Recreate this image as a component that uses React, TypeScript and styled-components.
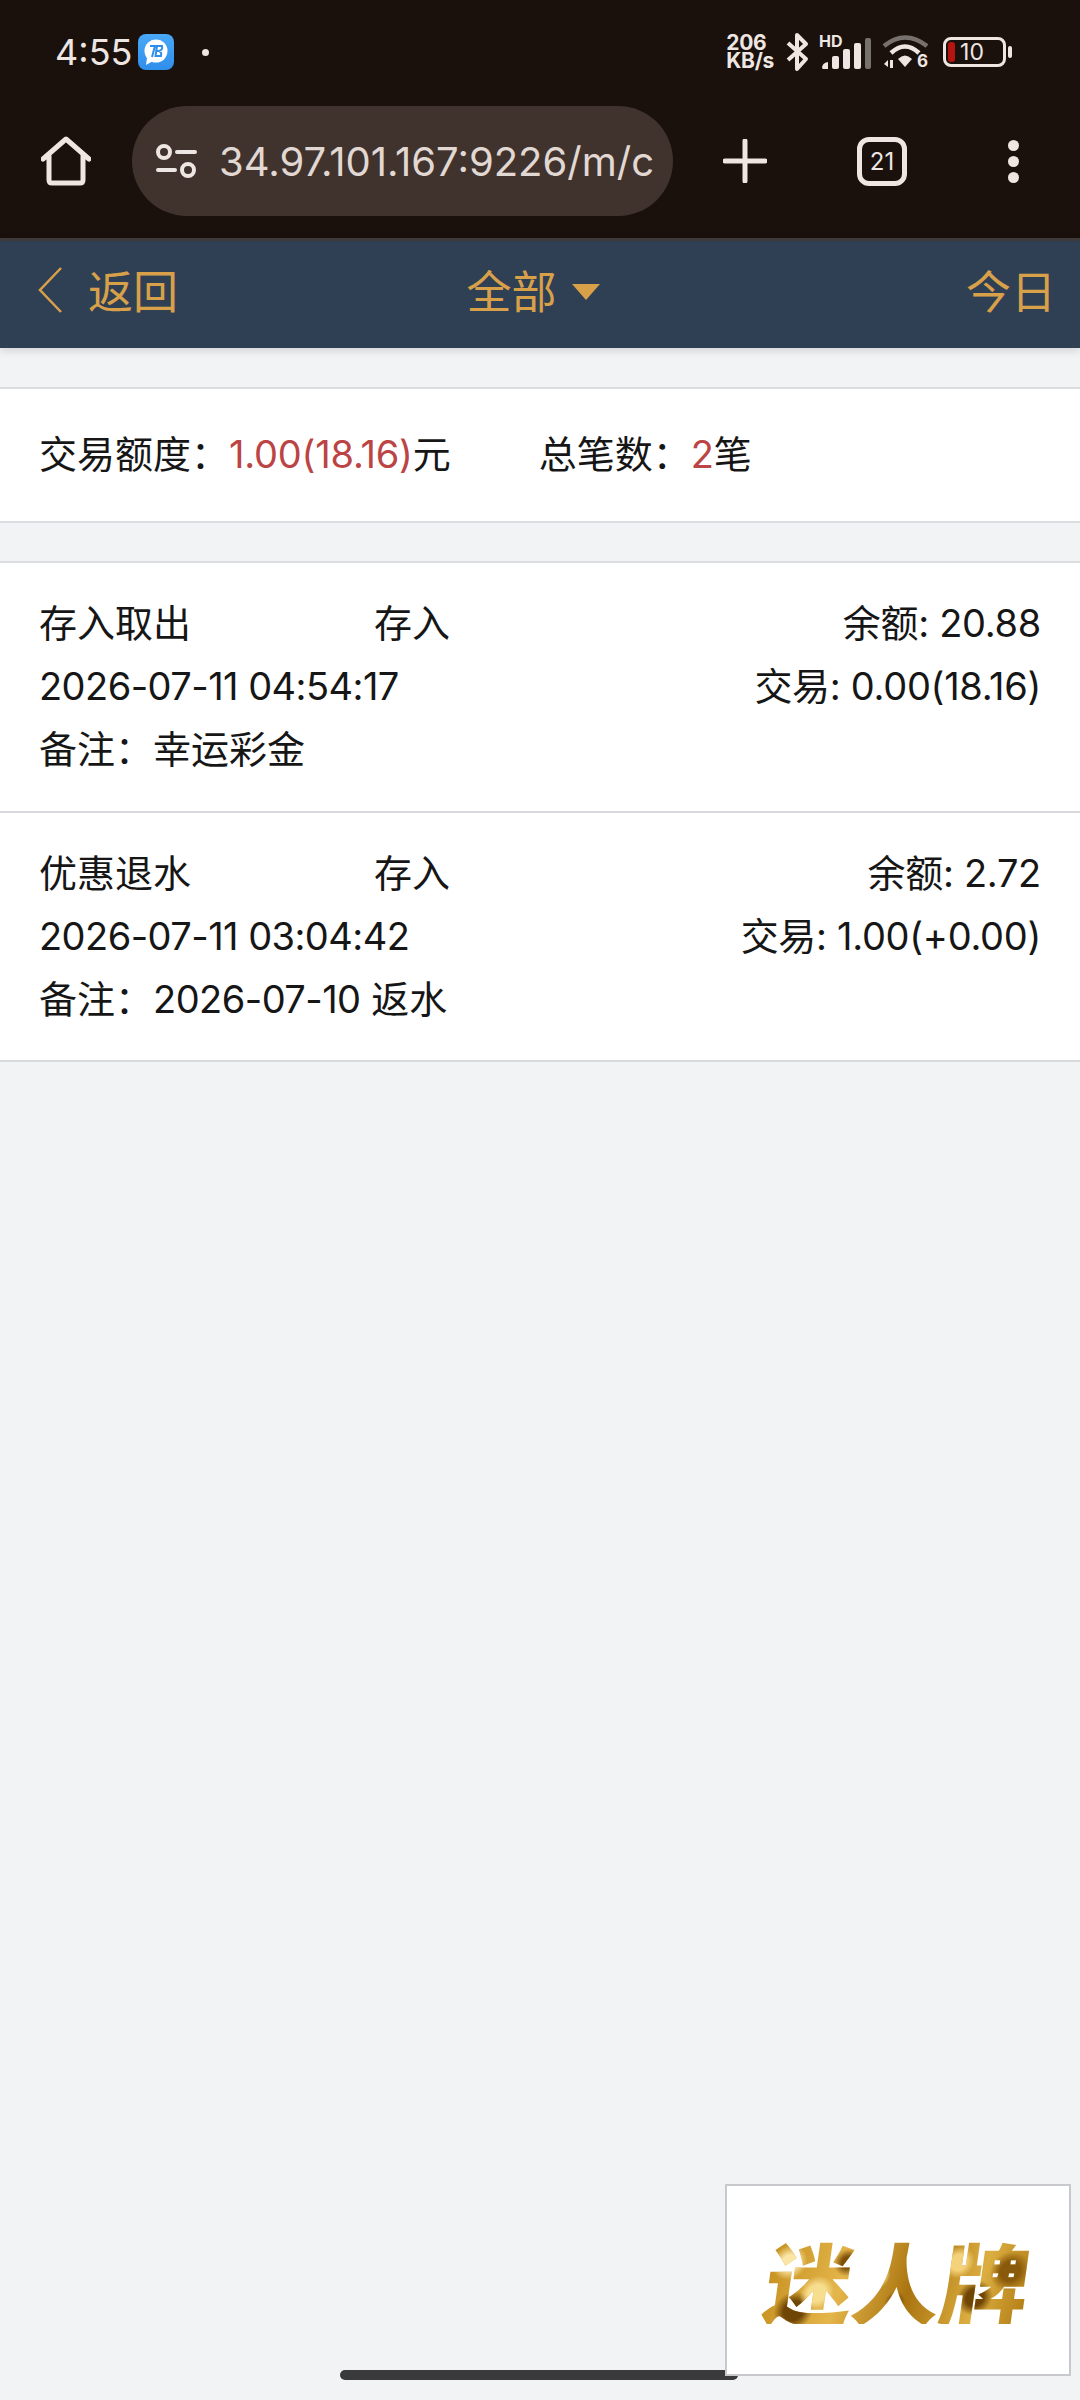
import styled, { createGlobalStyle } from 'styled-components';

const GlobalStyle = createGlobalStyle`
    html, body {
        margin: 0;
        padding: 0;
        background: #f2f3f5;
    }
    * {
        box-sizing: border-box;
    }
`;

const font = `Inter, "Noto Sans CJK SC", sans-serif`;

const records = [
    {
        type: '存入取出',
        dir: '存入',
        balance: '余额: 20.88',
        time: '2026-07-11 04:54:17',
        trade: '交易: 0.00(18.16)',
        note: '幸运彩金',
        noteDate: '',
    },
    {
        type: '优惠退水',
        dir: '存入',
        balance: '余额: 2.72',
        time: '2026-07-11 03:04:42',
        trade: '交易: 1.00(+0.00)',
        note: ' 返水',
        noteDate: '2026-07-10',
    },
];

const App = () => {
    return (
        <Page>
            <GlobalStyle />
            <Chrome>
                <StatusBar>
                    <StatusLeft>
                        <Clock>4:55</Clock>
                        <ChatBadge>
                            <svg width="36" height="36" viewBox="0 0 36 36">
                                <circle cx="18" cy="17" r="11.5" fill="#fff" />
                                <path d="M9 24 L8 31 L15 27 Z" fill="#fff" />
                                <path
                                    d="M12 12 H17 L14 23 M19 12 H24 Q25 16 21 17 Q24 18 23 22 H17.5 Z"
                                    fill="none"
                                    stroke="#2f8eea"
                                    strokeWidth="2"
                                />
                            </svg>
                        </ChatBadge>
                        <NotifyDot />
                    </StatusLeft>
                    <StatusRight>
                        <Speed>
                            <span>206</span>
                            <span>KB/s</span>
                        </Speed>
                        <svg width="25" height="40" viewBox="0 0 25 40">
                            <path
                                d="M3 11 L21 27 L12 37 V3 L21 12 L3 28"
                                fill="none"
                                stroke="#eee6e2"
                                strokeWidth="4"
                                strokeLinejoin="round"
                            />
                        </svg>
                        <SignalBox>
                            <HdLabel>HD</HdLabel>
                            <svg width="50" height="32" viewBox="0 0 50 32">
                                <path d="M1 30 q0 -5 6 -6 V31 H2 Z" fill="#eee6e2" />
                                <rect x="11" y="18" width="7" height="13" rx="2" fill="#eee6e2" />
                                <rect x="22" y="11" width="7" height="20" rx="2" fill="#eee6e2" />
                                <rect x="33" y="5" width="7" height="26" rx="2" fill="#eee6e2" />
                                <rect x="44" y="0" width="6" height="31" rx="2" fill="#77716e" />
                            </svg>
                        </SignalBox>
                        <WifiBox>
                            <svg width="47" height="36" viewBox="0 0 47 36">
                                <path d="M2 12 Q23 -5 45 12" fill="none" stroke="#77716e" strokeWidth="4.5" />
                                <path d="M9 19 Q23 6 37 19" fill="none" stroke="#eee6e2" strokeWidth="4.5" />
                                <path d="M16 25 Q23 18 30 25 L23 33 Z" fill="#eee6e2" />
                                <path d="M2 30 L6 26 V33 Z M8 26 H11 V34 H8 Z" fill="#eee6e2" />
                            </svg>
                            <WifiLabel>6</WifiLabel>
                        </WifiBox>
                        <Battery>
                            <BatteryBody>
                                <BatteryLevel />
                                <BatteryText>10</BatteryText>
                            </BatteryBody>
                            <BatteryCap />
                        </Battery>
                    </StatusRight>
                </StatusBar>
                <ToolBar>
                    <svg width="50" height="50" viewBox="0 0 50 50">
                        <path
                            d="M2 23 L25 3 L48 23 M8 19 V44 Q8 47 11 47 H39 Q42 47 42 44 V19"
                            fill="none"
                            stroke="#eee6e2"
                            strokeWidth="5"
                            strokeLinecap="round"
                            strokeLinejoin="round"
                        />
                    </svg>
                    <UrlPill>
                        <svg width="42" height="36" viewBox="0 0 42 36">
                            <circle cx="9" cy="9" r="6" fill="none" stroke="#eee6e2" strokeWidth="4" />
                            <path d="M22 9 H40 M3 27 H20" stroke="#eee6e2" strokeWidth="4" strokeLinecap="round" />
                            <circle cx="33" cy="27" r="6" fill="none" stroke="#eee6e2" strokeWidth="4" />
                        </svg>
                        <UrlText>34.97.101.167:9226/m/c</UrlText>
                    </UrlPill>
                    <PlusIcon width="44" height="44" viewBox="0 0 44 44">
                        <path d="M22 2 V42 M2 22 H42" stroke="#eee6e2" strokeWidth="5" strokeLinecap="round" />
                    </PlusIcon>
                    <TabCount>21</TabCount>
                    <MenuDots>
                        <i />
                        <i />
                        <i />
                    </MenuDots>
                </ToolBar>
            </Chrome>

            <NavBar>
                <NavBack>
                    <svg width="26" height="48" viewBox="0 0 26 48">
                        <path d="M24 2 L3 24 L24 46" fill="none" stroke="#d9a04a" strokeWidth="2.5" />
                    </svg>
                    <span>返回</span>
                </NavBack>
                <NavTitle>
                    全部
                    <Caret />
                </NavTitle>
                <NavAction>今日</NavAction>
            </NavBar>

            <SummaryCard>
                <SummaryItem>
                    交易额度：<Red>1.00(18.16)</Red>元
                </SummaryItem>
                <SummaryItem>
                    总笔数：<Red>2</Red>笔
                </SummaryItem>
            </SummaryCard>

            <RecordList>
                {records.map((r) => (
                    <RecordRow key={r.time}>
                        <LeftCol>
                            <TopLine>
                                <span>{r.type}</span>
                                <DirLabel>{r.dir}</DirLabel>
                            </TopLine>
                            <TimeLine>{r.time}</TimeLine>
                            <div>
                                备注：<NoteDate>{r.noteDate}</NoteDate>
                                {r.note}
                            </div>
                        </LeftCol>
                        <RightCol>
                            <div>{r.balance}</div>
                            <div>{r.trade}</div>
                        </RightCol>
                    </RecordRow>
                ))}
            </RecordList>

            <HomeBar />
            <LogoBox>
                <LogoText>迷人牌</LogoText>
            </LogoBox>
        </Page>
    );
};

export default App;

const Page = styled.div`
    position: relative;
    width: 1080px;
    height: 2400px;
    overflow: hidden;
    background: #f2f3f5;
    font-family: ${font};
    color: #161616;
`;

const Chrome = styled.div`
    height: 238px;
    background: #1a100c;
    color: #eee6e2;
`;

const StatusBar = styled.div`
    display: flex;
    align-items: center;
    justify-content: space-between;
    height: 104px;
    padding: 0 68px 0 55px;
`;

const StatusLeft = styled.div`
    display: flex;
    align-items: center;
`;

const Clock = styled.span`
    width: 83px;
    font-size: 36px;
`;

const ChatBadge = styled.div`
    width: 36px;
    height: 36px;
    border-radius: 8px;
    background: linear-gradient(180deg, #4aa8f8, #2f8eea);
`;

const NotifyDot = styled.div`
    width: 7px;
    height: 7px;
    margin-left: 28px;
    border-radius: 50%;
    background: #eee6e2;
`;

const StatusRight = styled.div`
    display: flex;
    align-items: center;
    gap: 11px;
`;

const Speed = styled.div`
    display: flex;
    flex-direction: column;
    font-size: 21px;
    font-weight: 700;
    line-height: 18px;
    letter-spacing: -0.3px;
`;

const SignalBox = styled.div`
    position: relative;
    width: 50px;
    height: 32px;
    margin-top: 4px;
`;

const HdLabel = styled.span`
    position: absolute;
    left: -2px;
    top: -5px;
    font-size: 16px;
    font-weight: 700;
    line-height: 16px;
`;

const WifiBox = styled.div`
    position: relative;
    width: 47px;
    height: 36px;
`;

const WifiLabel = styled.span`
    position: absolute;
    right: 1px;
    bottom: 0;
    font-size: 17px;
    font-weight: 700;
    line-height: 17px;
`;

const Battery = styled.div`
    display: flex;
    align-items: center;
    gap: 2px;
    margin-left: 3px;
`;

const BatteryBody = styled.div`
    position: relative;
    display: flex;
    align-items: center;
    justify-content: center;
    width: 63px;
    height: 30px;
    border: 3px solid #eee6e2;
    border-radius: 8px;
    padding-right: 5px;
`;

const BatteryLevel = styled.div`
    position: absolute;
    left: 2px;
    top: 2px;
    bottom: 2px;
    width: 7px;
    border-radius: 3px;
    background: #b5140f;
`;

const BatteryText = styled.span`
    font-size: 23px;
    line-height: 24px;
`;

const BatteryCap = styled.div`
    width: 4px;
    height: 12px;
    border-radius: 2px;
    background: #eee6e2;
`;

const ToolBar = styled.div`
    display: flex;
    align-items: center;
    height: 110px;
    padding: 0 0 0 41px;
    margin-top: 2px;
`;

const UrlPill = styled.div`
    display: flex;
    align-items: center;
    gap: 22px;
    width: 541px;
    height: 110px;
    margin-left: 41px;
    padding-left: 23px;
    border-radius: 55px;
    background: #40332d;
`;

const UrlText = styled.span`
    font-size: 40px;
    color: #e2d8d3;
    white-space: nowrap;
`;

const PlusIcon = styled.svg`
    margin-left: 50px;
`;

const TabCount = styled.div`
    display: flex;
    align-items: center;
    justify-content: center;
    width: 50px;
    height: 49px;
    margin-left: 90px;
    border: 5px solid #eee6e2;
    border-radius: 12px;
    font-size: 24px;
`;

const MenuDots = styled.div`
    display: flex;
    flex-direction: column;
    gap: 5px;
    margin-left: 101px;

    i {
        display: block;
        width: 11px;
        height: 11px;
        border-radius: 50%;
        background: #eee6e2;
    }
`;

const NavBar = styled.div`
    position: relative;
    display: flex;
    align-items: center;
    justify-content: space-between;
    height: 110px;
    padding: 0 24px 10px 37px;
    border-top: 3px solid #3e3a3a;
    background: #2f4054;
    color: #d9a04a;
    font-size: 45px;
    box-shadow: 0 3px 8px rgba(0, 0, 0, 0.12);
`;

const NavBack = styled.div`
    display: flex;
    align-items: center;
    gap: 25px;
`;

const NavTitle = styled.div`
    display: flex;
    align-items: center;
    gap: 15px;
    margin-left: -78px;
`;

const Caret = styled.i`
    width: 0;
    height: 0;
    margin-top: 4px;
    border-left: 14px solid transparent;
    border-right: 14px solid transparent;
    border-top: 16px solid #d9a04a;
`;

const NavAction = styled.div``;

const SummaryCard = styled.div`
    display: flex;
    align-items: center;
    gap: 88px;
    height: 136px;
    margin-top: 39px;
    padding: 0 39px 8px;
    border-top: 2px solid #dcdde0;
    border-bottom: 2px solid #dcdde0;
    background: #fff;
    font-size: 38px;
`;

const SummaryItem = styled.div``;

const Red = styled.span`
    color: #bb4444;
    letter-spacing: -0.2px;
`;

const RecordList = styled.div`
    margin-top: 38px;
    border-top: 2px solid #dcdde0;
    background: #fff;
`;

const RecordRow = styled.div`
    display: flex;
    justify-content: space-between;
    height: 250px;
    padding: 29px 39px 0;
    border-bottom: 2px solid #d8d9dc;
    font-size: 38px;
    line-height: 63px;

    & + & {
        height: 249px;
    }
`;

const LeftCol = styled.div``;

const TopLine = styled.div`
    display: flex;
`;

const TimeLine = styled.div`
    letter-spacing: -0.55px;
`;

const NoteDate = styled.span`
    letter-spacing: -0.55px;
`;

const DirLabel = styled.span`
    margin-left: 183px;
`;

const RightCol = styled.div`
    text-align: right;
    letter-spacing: -0.3px;
`;

const HomeBar = styled.div`
    position: absolute;
    left: 340px;
    top: 2370px;
    width: 398px;
    height: 10px;
    border-radius: 5px;
    background: #3a3a3c;
`;

const LogoBox = styled.div`
    position: absolute;
    left: 725px;
    top: 2184px;
    display: flex;
    align-items: center;
    justify-content: center;
    width: 346px;
    height: 192px;
    border: 2px solid #c8c9cc;
    background: #fff;
`;

const LogoText = styled.div`
    font-family: "Noto Sans CJK SC", sans-serif;
    font-size: 88px;
    font-weight: 900;
    line-height: 1;
    white-space: nowrap;
    transform: skewX(-8deg);
    color: transparent;
    background:
        radial-gradient(circle at 8% 30%, #fbe6a6 0 3%, transparent 7%),
        radial-gradient(circle at 20% 65%, #f7dd8e 0 4%, transparent 8%),
        radial-gradient(circle at 30% 30%, #7d4f08 0 3%, transparent 7%),
        radial-gradient(circle at 42% 45%, #fbe6a6 0 4%, transparent 8%),
        radial-gradient(circle at 50% 75%, #7d4f08 0 3%, transparent 7%),
        radial-gradient(circle at 60% 55%, #fdeebc 0 4%, transparent 8%),
        radial-gradient(circle at 72% 30%, #f4d27a 0 4%, transparent 8%),
        radial-gradient(circle at 80% 70%, #6f4506 0 4%, transparent 8%),
        radial-gradient(circle at 92% 40%, #8a5a0c 0 4%, transparent 8%),
        radial-gradient(circle at 12% 85%, #6f4506 0 4%, transparent 8%),
        linear-gradient(100deg, #c48f1e, #e4b54a 30%, #a9740f 55%, #dcae40 80%, #b07c14);
    -webkit-background-clip: text;
    background-clip: text;
`;
